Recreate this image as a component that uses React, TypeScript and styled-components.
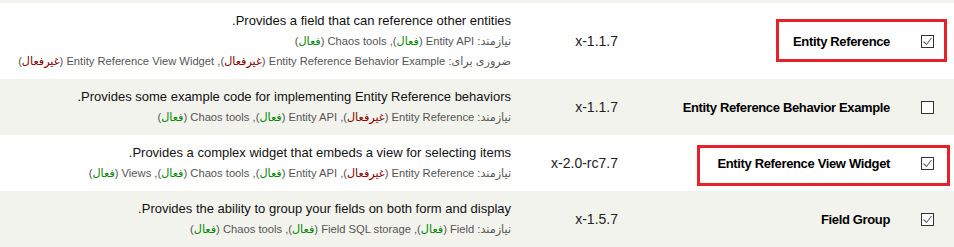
import React from "react";
import styled, { createGlobalStyle } from "styled-components";

const GlobalStyle = createGlobalStyle`
    html, body {
        margin: 0;
        padding: 0;
        background: #ffffff;
    }
    body {
        font-family: "Liberation Sans", "DejaVu Sans", sans-serif;
        color: #222;
    }
`;

interface Dependency {
    name: string;
    enabled: boolean;
}

interface ModuleRow {
    name: string;
    version: string;
    description: string;
    requires: Dependency[];
    requiredBy?: Dependency[];
    checked: boolean;
    highlight?: { top: number; right: number; width: number; height: number };
}

const modules: ModuleRow[] = [
    {
        name: "Entity Reference",
        version: "7.x-1.1",
        description: "Provides a field that can reference other entities.",
        requires: [
            { name: "Entity API", enabled: true },
            { name: "Chaos tools", enabled: true },
        ],
        requiredBy: [
            { name: "Entity Reference Behavior Example", enabled: false },
            { name: "Entity Reference View Widget", enabled: false },
        ],
        checked: true,
        highlight: { top: 16, right: 7, width: 171, height: 43 },
    },
    {
        name: "Entity Reference Behavior Example",
        version: "7.x-1.1",
        description: "Provides some example code for implementing Entity Reference behaviors.",
        requires: [
            { name: "Entity Reference", enabled: false },
            { name: "Entity API", enabled: true },
            { name: "Chaos tools", enabled: true },
        ],
        checked: false,
    },
    {
        name: "Entity Reference View Widget",
        version: "7.x-2.0-rc7",
        description: "Provides a complex widget that embeds a view for selecting items.",
        requires: [
            { name: "Entity Reference", enabled: false },
            { name: "Entity API", enabled: true },
            { name: "Chaos tools", enabled: true },
            { name: "Views", enabled: true },
        ],
        checked: true,
        highlight: { top: 10, right: 4, width: 253, height: 41 },
    },
    {
        name: "Field Group",
        version: "7.x-1.5",
        description: "Provides the ability to group your fields on both form and display.",
        requires: [
            { name: "Field", enabled: true },
            { name: "Field SQL storage", enabled: true },
            { name: "Chaos tools", enabled: true },
        ],
        checked: true,
    },
];

const Table = styled.div`
    direction: rtl;
    width: 954px;
    height: 247px;
    overflow: hidden;
    box-sizing: border-box;
    padding-top: 3px;
    background: #f3f3ee;
`;

const Row = styled.div<{ $odd: boolean }>`
    position: relative;
    display: grid;
    grid-template-columns: 54px 270px 108px 1fr;
    align-items: center;
    padding: 8px 0 8px;
    background: ${p => (p.$odd ? "#ffffff" : "#f3f3ee")};
`;

const CheckCell = styled.div`
    display: flex;
    padding-right: 20px;
`;

const Box = styled.span`
    display: flex;
    align-items: center;
    justify-content: center;
    width: 13px;
    height: 13px;
    box-sizing: border-box;
    border: 1px solid #333;
    background: #fff;
`;

const NameCell = styled.div`
    padding-right: 10px;
    font-size: 13px;
    letter-spacing: -0.35px;
    font-weight: bold;
    color: #000;
`;

const VersionCell = styled.div`
    padding-right: 12px;
    font-size: 14px;
    color: #222;
`;

const DescCell = styled.div`
    padding-right: 11px;
`;

const Description = styled.div`
    font-size: 13px;
    line-height: 20px;
    color: #111;
`;

const Requirements = styled.div`
    font-size: 11.2px;
    line-height: 20px;
    color: #555;
`;

const Status = styled.span<{ $enabled: boolean }>`
    color: ${p => (p.$enabled ? "#080" : "#800")};
`;

const Highlight = styled.div<{ $top: number; $right: number; $width: number; $height: number }>`
    position: absolute;
    top: ${p => p.$top}px;
    right: ${p => p.$right}px;
    width: ${p => p.$width}px;
    height: ${p => p.$height}px;
    box-sizing: border-box;
    border: 3px solid #e8202a;
    pointer-events: none;
`;

function Checkbox({ checked }: { checked: boolean }) {
    return (
        <Box>
            {checked && (
                <svg width="11" height="11" viewBox="0 0 11 11">
                    <path d="M1.5 5.5 L4.5 8.5 L9.5 2" fill="none" stroke="#666" strokeWidth="1.1" />
                </svg>
            )}
        </Box>
    );
}

function DependencyList({ label, items }: { label: string; items: Dependency[] }) {
    return (
        <Requirements>
            {label}:{" "}
            {items.map((d, i) => (
                <span key={d.name}>
                    {d.name} (<Status $enabled={d.enabled}>{d.enabled ? "فعال" : "غیرفعال"}</Status>)
                    {i < items.length - 1 ? ", " : ""}
                </span>
            ))}
        </Requirements>
    );
}

export default function App() {
    return (
        <>
            <GlobalStyle />
            <Table>
                {modules.map((m, i) => (
                    <Row key={m.name} $odd={i % 2 === 0}>
                        <CheckCell>
                            <Checkbox checked={m.checked} />
                        </CheckCell>
                        <NameCell>{m.name}</NameCell>
                        <VersionCell>{m.version}</VersionCell>
                        <DescCell>
                            <Description>{m.description}</Description>
                            <DependencyList label="نیازمند" items={m.requires} />
                            {m.requiredBy && <DependencyList label="ضروری برای" items={m.requiredBy} />}
                        </DescCell>
                        {m.highlight && (
                            <Highlight
                                $top={m.highlight.top}
                                $right={m.highlight.right}
                                $width={m.highlight.width}
                                $height={m.highlight.height}
                            />
                        )}
                    </Row>
                ))}
            </Table>
        </>
    );
}
